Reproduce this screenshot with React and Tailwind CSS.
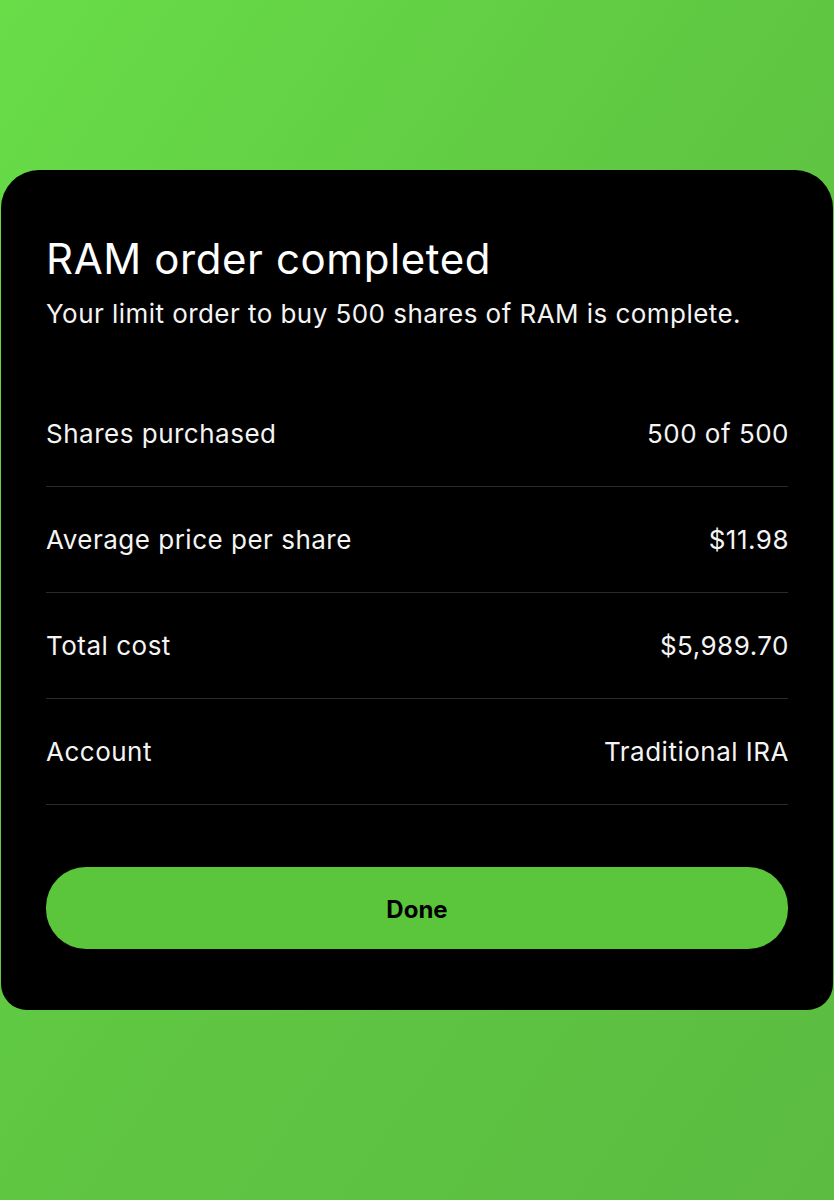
const rows = [
  { label: 'Shares purchased', value: '500 of 500' },
  { label: 'Average price per share', value: '$11.98' },
  { label: 'Total cost', value: '$5,989.70' },
  { label: 'Account', value: 'Traditional IRA' },
]

export default function App() {
  return (
    <div
      className="min-h-[1200px] w-full bg-linear-to-br from-[#68dd48] via-[#5fc642] to-[#5bbc41] pt-[170px]"
      style={{ fontFamily: 'Inter, "Noto Sans", sans-serif' }}
    >
      <div className="mx-px rounded-t-[38px] rounded-b-[26px] bg-black pt-[64px] pr-[45px] pb-[61px] pl-[45px]">
        <h1 className="text-[42px] leading-[50px] font-normal tracking-[0.6px] text-white">RAM order completed</h1>
        <p className="mt-[14px] text-[26px] leading-[32px] tracking-[0.45px] text-[#f4f4f4]">
          Your limit order to buy 500 shares of RAM is complete.
        </p>

        <div className="mt-[51px]">
          {rows.map((row) => (
            <div key={row.label} className="flex h-[106px] items-center justify-between border-b border-[#2a2a2a] text-[26px] tracking-[0.5px] text-[#f4f4f4]">
              <span>{row.label}</span>
              <span className="-mr-[1px]">{row.value}</span>
            </div>
          ))}
        </div>

        <button
          type="button"
          className="mt-[62px] flex h-[82px] w-full items-center justify-center rounded-[40px] bg-[#5bc53c] pt-[3px] text-[24px] font-bold text-black"
        >
          Done
        </button>
      </div>
    </div>
  )
}
